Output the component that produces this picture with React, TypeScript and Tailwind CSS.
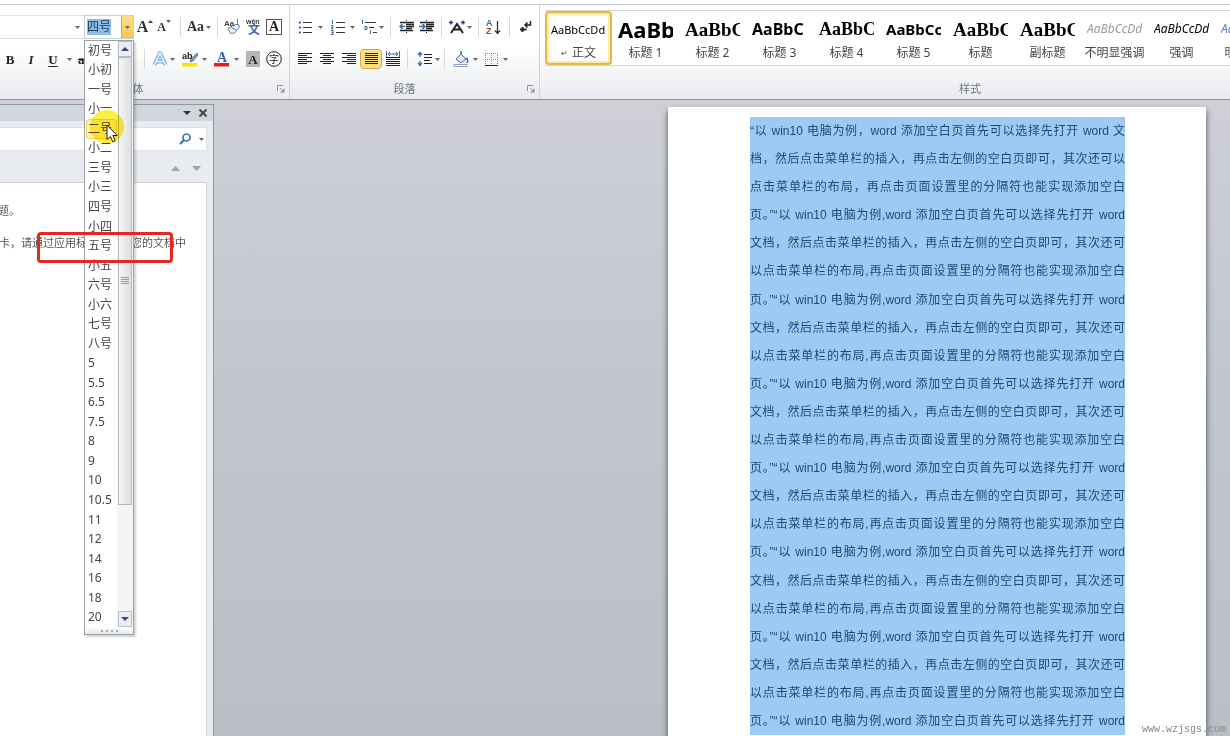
import React, { useState } from 'react';
import clsx from 'clsx';

const SIZES = [
  '初号', '小初', '一号', '小一', '二号', '小二', '三号', '小三', '四号', '小四',
  '五号', '小五', '六号', '小六', '七号', '八号', '5', '5.5', '6.5', '7.5',
  '8', '9', '10', '10.5', '11', '12', '14', '16', '18', '20',
];

const STYLES = [
  { label: '正文', sample: 'AaBbCcDd', cls: 'text-[11px] text-black' },
  { label: '标题 1', sample: 'AaBb', cls: 'text-[22px] font-bold text-black' },
  { label: '标题 2', sample: 'AaBbC', cls: "text-[19px] font-bold text-black font-['Liberation_Serif',serif]" },
  { label: '标题 3', sample: 'AaBbC', cls: 'text-base font-bold text-black' },
  { label: '标题 4', sample: 'AaBbC', cls: "text-[18px] font-bold text-black font-['Liberation_Serif',serif]" },
  { label: '标题 5', sample: 'AaBbCc', cls: 'text-[15px] font-bold text-black' },
  { label: '标题', sample: 'AaBbC', cls: "text-[19px] font-bold text-black font-['Liberation_Serif',serif]" },
  { label: '副标题', sample: 'AaBbC', cls: "text-[19px] font-bold text-black font-['Liberation_Serif',serif]" },
  { label: '不明显强调', sample: 'AaBbCcDd', cls: 'text-xs italic text-[#9a9a9a]' },
  { label: '强调', sample: 'AaBbCcDd', cls: 'text-xs italic text-black' },
  { label: '明显强调', sample: 'AaBbCcDd', cls: 'text-xs italic text-[#4f81bd]' },
];

const REPEATED = [
  '文档，然后点击菜单栏的插入，再点击左侧的空白页即可，其次还可',
  '以点击菜单栏的布局,再点击页面设置里的分隔符也能实现添加空白',
  '页。”“以 win10 电脑为例,word 添加空白页首先可以选择先打开 word',
];

const LINES = [
  '“以 win10 电脑为例，word 添加空白页首先可以选择先打开 word 文',
  '档，然后点击菜单栏的插入，再点击左侧的空白页即可，其次还可以',
  '点击菜单栏的布局，再点击页面设置里的分隔符也能实现添加空白',
  REPEATED[2],
  ...REPEATED, ...REPEATED, ...REPEATED, ...REPEATED, ...REPEATED, ...REPEATED,
];

const Caret: React.FC<{ className?: string }> = ({ className }) => (
  <svg viewBox="0 0 5 3" className={clsx('h-[3px] w-[5px] shrink-0', className)} fill="#666">
    <path d="M0 0h5L2.5 3z" />
  </svg>
);

const Sep: React.FC = () => <span className="h-5 w-px shrink-0 bg-[#d5d8dc]" />;

interface ToolProps {
  label: string;
  className: string;
  caret?: boolean;
  children: React.ReactNode;
}

const Tool: React.FC<ToolProps> = ({ label, className, caret, children }) => (
  <button
    type="button"
    aria-label={label}
    className={clsx('flex h-5 shrink-0 items-center justify-center leading-none', caret && 'gap-1', className)}
  >
    {children}
    {caret && <Caret />}
  </button>
);

const Icon: React.FC<{ children: React.ReactNode }> = ({ children }) => (
  <svg viewBox="0 0 16 16" className="size-4 shrink-0" fill="none" stroke="#222">
    {children}
  </svg>
);

const Launcher: React.FC<{ label: string }> = ({ label }) => (
  <button type="button" aria-label={label} className="absolute right-1 bottom-1.5 size-2">
    <svg viewBox="0 0 8 8" className="size-2" fill="none" stroke="#8d949c">
      <path d="M.5 6V.5H6M3 3l3 3" />
      <path d="M7.500 3v4.500H3z" fill="#8d949c" stroke="none" />
    </svg>
  </button>
);

const SizeMenu: React.FC<{ active: string; onPick: (s: string) => void }> = ({ active, onPick }) => (
  <div className="absolute top-full -left-px z-20 mt-0.5 w-[50px] border border-[#9aa0a8] bg-white shadow-[2px_2px_2px_rgba(0,0,0,0.18)]">
    <div className="flex h-[586px]">
      <div className="flex flex-1 flex-col pl-px" role="listbox" aria-label="字号列表">
        {SIZES.map(s => (
          <button
            key={s}
            type="button"
            role="option"
            aria-selected={s === active}
            onClick={() => onPick(s)}
            className={clsx(
              'flex min-h-0 flex-1 items-center pl-0.5 text-left text-xs leading-none whitespace-nowrap text-[#444]',
              s === active && 'rounded-sm bg-[#fff0a8] shadow-[inset_0_0_0_1px_#f5cf62]'
            )}
          >
            {s}
          </button>
        ))}
      </div>
      <div className="flex w-4 flex-col bg-[#f5f5f6] px-px">
        <div className="flex h-4 items-center justify-center border border-[#b9bec8] bg-[#e9edf5]">
          <svg viewBox="0 0 8 4" className="h-1 w-2" fill="#3f4a6b"><path d="M4 0l4 4H0z" /></svg>
        </div>
        <div className="flex h-[448px] items-center justify-center border border-[#b5b5b8] bg-linear-to-r from-[#f5f5f6] to-[#dedfe2]">
          <svg viewBox="0 0 8 8" className="size-2" stroke="#999"><path d="M0 .5h8M0 2.500h8M0 4.500h8M0 6.500h8" /></svg>
        </div>
        <div className="flex-1" />
        <div className="flex h-4 items-center justify-center border border-[#b9bec8] bg-[#e9edf5]">
          <svg viewBox="0 0 8 4" className="h-1 w-2" fill="#3f4a6b"><path d="M0 0h8L4 4z" /></svg>
        </div>
      </div>
    </div>
    <div className="flex h-[7px] items-center justify-center bg-linear-to-b from-white to-[#e6e8eb]">
      <svg viewBox="0 0 17 2" className="h-0.5 w-[17px]" fill="#a5a9ae">
        <path d="M0 0h2v2H0zM5 0h2v2H5zM10 0h2v2h-2zM15 0h2v2h-2z" />
      </svg>
    </div>
  </div>
);

const FontGroup: React.FC = () => {
  const [size, setSize] = useState('四号');
  const [open, setOpen] = useState(true);

  return (
    <section className="relative flex w-[290px] shrink-0 flex-col border-r border-[#cfd3d8]">
      <div className="mt-[10px] flex h-6 items-center">
        <div className="flex h-6 w-[84px] items-center border-y border-[#dcdfe3] bg-white pr-1">
          <input aria-label="字体" className="min-w-0 flex-1 outline-none" />
          <Caret />
        </div>
        <div className="relative flex h-6 w-[50px] border border-[#c9ced5] bg-white">
          <label className="flex flex-1 items-center pl-0.5">
            <input
              aria-label="字号"
              value={size}
              onChange={e => setSize(e.target.value)}
              className="h-4 w-6 bg-[#8dbbe6] text-xs text-[#1d3f63] outline-none"
            />
          </label>
          <button
            type="button"
            aria-label="展开字号"
            onClick={() => setOpen(!open)}
            className="flex w-3 items-center justify-center border-l border-[#d9a93c] bg-linear-to-b from-[#fde08a] to-[#f7c84b]"
          >
            <Caret />
          </button>
          {open && <SizeMenu active="二号" onPick={setSize} />}
        </div>
        <Tool label="增大字体" className="w-[22px] font-['Liberation_Serif',serif] text-base font-bold text-[#333]">
          A<svg viewBox="0 0 5 3" className="mb-3 h-[3px] w-[5px]" fill="#345"><path d="M0 3h5L2.500 0z" /></svg>
        </Tool>
        <Tool label="缩小字体" className="mr-2 w-4 font-['Liberation_Serif',serif] text-xs font-bold text-[#333]">
          A<Caret className="mb-3" />
        </Tool>
        <Sep />
        <Tool label="更改大小写" caret className="w-9 font-['Liberation_Serif',serif] text-sm font-bold text-[#333]">
          <span className="-mr-0.5">Aa</span>
        </Tool>
        <Sep />
        <Tool label="清除格式" className="ml-1.5 w-4">
          <Icon>
            <path d="M4 9.500L8 7l6-2 1.500 3-5 6-4 .5z" fill="#eef3fa" stroke="#5b7dad" />
            <path d="M7 8l5 3M13.500 0v6" stroke="#5b7dad" />
            <text x="0" y="7" fontSize="8" fontWeight="bold" fill="#444" stroke="none" fontFamily="Liberation Sans">Aa</text>
          </Icon>
        </Tool>
        <Tool label="拼音指南" className="ml-1.5 w-4">
          <svg viewBox="0 0 16 16" className="size-4" stroke="none">
            <text x="0" y="5" fontSize="7" fontWeight="bold" fill="#333" fontFamily="Liberation Sans">wén</text>
            <text x="2" y="15" fontSize="12" fontWeight="bold" fill="#3a68ad" fontFamily="Noto Sans CJK SC">文</text>
          </svg>
        </Tool>
        <Tool label="字符边框" className="ml-1 max-h-4 w-4 border border-[#555] font-['Liberation_Serif',serif] text-sm font-bold text-[#222]">
          A
        </Tool>
      </div>

      <div className="mt-2 flex h-6 items-center font-['Liberation_Serif',serif] text-[13px] text-[#222]">
        <Tool label="加粗" className="w-5 font-bold">B</Tool>
        <Tool label="倾斜" className="w-[22px] font-bold italic">I</Tool>
        <Tool label="下划线" className="w-[22px] font-bold underline underline-offset-2">U</Tool>
        <Tool label="下划线样式" className="w-[10px]"><Caret /></Tool>
        <Tool label="删除线" className="ml-1 w-[66px] justify-start! font-bold line-through">abc</Tool>
        <Sep />
        <Tool label="文本效果" caret className="w-9">
          <svg viewBox="0 0 16 16" className="-mr-0.5 size-4 shrink-0">
            <path d="M2.500 14L8 2l5.500 12M4.500 10.500h7" fill="none" stroke="#7fb2e0" strokeWidth="4" strokeLinejoin="round" />
            <path d="M2.500 14L8 2l5.500 12M4.500 10.500h7" fill="none" stroke="#eef7ff" strokeWidth="1.500" />
          </svg>
        </Tool>
        <Tool label="突出显示" caret className="w-[26px]">
          <svg viewBox="0 0 16 16" className="size-4 shrink-0">
            <text x="0" y="8" fontSize="9" fontWeight="bold" fill="#222" fontFamily="Liberation Sans">ab</text>
            <path d="M15 2L9 8l-1 3 3-1 5-6z" fill="#7a95bd" stroke="#4a6590" strokeWidth=".7" />
            <path d="M0 12h15v3.500H0z" fill="#f6e400" />
          </svg>
        </Tool>
        <Tool label="字体颜色" caret className="ml-1 w-[31px]">
          <svg viewBox="0 0 16 16" className="size-4 shrink-0">
            <text x="3" y="11" fontSize="14" fontWeight="bold" fill="#3b63a8" fontFamily="Liberation Serif">A</text>
            <path d="M0 12h15v3.500H0z" fill="#e3200f" />
          </svg>
        </Tool>
        <Tool label="字符底纹" className="ml-1 max-h-4 w-[14px] bg-[#b5b5b5] font-bold">A</Tool>
        <Tool label="带圈字符" className="ml-1.5 w-4">
          <svg viewBox="0 0 16 16" className="size-4">
            <circle cx="8" cy="8" r="7.300" fill="none" stroke="#222" />
            <text x="3" y="12" fontSize="10" fill="#222" fontFamily="Noto Sans CJK SC">字</text>
          </svg>
        </Tool>
      </div>
      <h2 className="mt-auto mb-0.5 pr-6 text-center text-[11px] leading-4 text-[#6b7480]">字体</h2>
      <Launcher label="字体设置" />
    </section>
  );
};

const ParagraphGroup: React.FC = () => (
  <section className="relative flex w-[250px] shrink-0 flex-col border-r border-[#cfd3d8]">
    <div className="mt-[10px] flex h-6 items-center pl-2">
      <Tool label="项目符号" caret className="w-6">
        <Icon>
          <path d="M5 3.500h9M5 8.500h9M5 13.500h9" stroke="#333" />
          <path d="M1 3.500h2M1 8.500h2M1 13.500h2" stroke="#3c66ad" strokeWidth="2" />
        </Icon>
      </Tool>
      <Tool label="编号" caret className="ml-2 w-6">
        <Icon>
          <path d="M6 3.500h9M6 8.500h9M6 13.500h9" stroke="#333" />
          <path d="M2.500 1v4M1 6.500h2v2H1.500v1.500h2M1 11.500h2v4H1M1.500 13.500h2" stroke="#3c66ad" />
        </Icon>
      </Tool>
      <Tool label="多级列表" caret className="ml-1.5 w-6 gap-0.5!">
        <Icon>
          <path d="M4 3.500h11M8 8.500h5M12 13.500h4" stroke="#333" />
          <path d="M1.500 1v4M4 7.500h2v3H4zM9.500 11v4" stroke="#3c66ad" />
        </Icon>
      </Tool>
      <span className="w-1.5" />
      <Sep />
      <Tool label="减少缩进" className="ml-2 w-4">
        <Icon>
          <path d="M1 3.500h14M7 5.500h8M7 7.500h8M7 9.500h6M1 11.500h13" strokeWidth="1.300" />
          <path d="M7.500 1v14" strokeDasharray="1 1" />
          <path d="M6 7.500H1M3.500 5L1 7.500 3.500 10" stroke="#3c66ad" strokeWidth="1.500" />
        </Icon>
      </Tool>
      <Tool label="增加缩进" className="ml-1 w-4">
        <Icon>
          <path d="M1 3.500h14M7 5.500h8M7 7.500h8M7 9.500h6M1 11.500h13" strokeWidth="1.300" />
          <path d="M7.500 1v14" strokeDasharray="1 1" />
          <path d="M0 7.500h6M3.500 5L6 7.500 3.500 10" stroke="#3c66ad" strokeWidth="1.500" />
        </Icon>
      </Tool>
      <span className="w-1.5" />
      <Sep />
      <Tool label="中文版式" caret className="ml-1.5 w-6 gap-0.5!">
        <Icon>
          <path d="M2 14L8 5l6 9M5 10.500h6" strokeWidth="2" />
          <path d="M0 3.500h4M2 1.500v4M12 3.500h4M14 1.500v4" stroke="#2c2f7c" strokeWidth="1.300" />
        </Icon>
      </Tool>
      <span className="w-1.5" />
      <Sep />
      <Tool label="排序" className="ml-1.5 w-4">
        <svg viewBox="0 0 16 16" className="size-4">
          <text x="1" y="7" fontSize="9" fontWeight="bold" fill="#3c66ad" fontFamily="Liberation Sans">A</text>
          <text x="1" y="15" fontSize="9" fontWeight="bold" fill="#a5413c" fontFamily="Liberation Sans">Z</text>
          <path d="M12.500 2v12M10 11.500l2.500 3 2.500-3" fill="none" stroke="#333" strokeWidth="1.300" />
        </svg>
      </Tool>
      <span className="w-2" />
      <Sep />
      <Tool label="显示编辑标记" className="ml-2 w-4">
        <Icon>
          <path d="M12.500 2v4H7M9.500 3.500L7 6l2.500 2.500" strokeWidth="1.500" />
          <path d="M8.500 10.500H2M4.500 8v5" strokeWidth="2" />
        </Icon>
      </Tool>
    </div>
    <div className="mt-2 flex h-6 items-center pl-1">
      <Tool label="左对齐" className="w-[22px]">
        <Icon><path d="M1 2.500h14M1 4.500h9M1 6.500h14M1 8.500h9M1 10.500h14M1 12.500h9" /></Icon>
      </Tool>
      <Tool label="居中" className="w-[22px]">
        <Icon><path d="M1 2.500h14M4 4.500h8M1 6.500h14M4 8.500h8M1 10.500h14M4 12.500h8" /></Icon>
      </Tool>
      <Tool label="右对齐" className="w-[22px]">
        <Icon><path d="M1 2.500h14M6 4.500h9M1 6.500h14M6 8.500h9M1 10.500h14M6 12.500h9" /></Icon>
      </Tool>
      <Tool label="两端对齐" className="w-[22px] rounded-sm border border-[#d9a83f] bg-[#ffdf7f]">
        <Icon><path d="M2 2.500h13M2 4.500h13M2 6.500h13M2 8.500h13M2 10.500h13M2 12.500h13" /></Icon>
      </Tool>
      <Tool label="分散对齐" className="w-[22px]">
        <Icon>
          <path d="M1 6.500h14M1 8.500h14M1 10.500h14M1 12.500h14M1 14.500h14" />
          <path d="M1.500 0v6M14.500 0v6M3 3h10M5 1L3 3l2 2M11 1l2 2-2 2" stroke="#3c66ad" />
        </Icon>
      </Tool>
      <span className="w-[3px]" />
      <Sep />
      <Tool label="行距" caret className="ml-2 w-6 gap-0.5!">
        <Icon>
          <path d="M7 3.500h8M7 6.500h8M7 9.500h6M7 12.500h8" />
          <path d="M3 1v5M1 4l2-2.500L5 4M3 15v-5M1 12l2 2.500L5 12" stroke="#3c66ad" strokeWidth="1.300" />
        </Icon>
      </Tool>
      <span className="w-1" />
      <Sep />
      <Tool label="底纹" caret className="ml-2 w-6">
        <Icon>
          <path d="M3 8l5-5 5 5-5 4z" fill="#dce7f5" stroke="#4a6590" />
          <path d="M8 3V0M13 7c2 1 2 3 1 5" stroke="#3c66ad" strokeWidth="1.500" />
          <path d="M1 13.500h13v2H1z" fill="#fff" stroke="#8d9db3" />
        </Icon>
      </Tool>
      <Tool label="边框" caret className="ml-1.5 w-6">
        <Icon>
          <path d="M2 2.500h13M2.500 2v12M14.500 2v12M8.500 2v12M2 8.500h13" stroke="#888" strokeDasharray="1 1" />
          <path d="M2 14.500h13" />
        </Icon>
      </Tool>
    </div>
    <h2 className="mt-auto mb-0.5 pr-5 text-center text-[11px] leading-4 text-[#6b7480]">段落</h2>
    <Launcher label="段落设置" />
  </section>
);

const StylesGroup: React.FC = () => {
  const [selected, setSelected] = useState('正文');

  return (
    <section className="flex min-w-0 flex-1 flex-col pl-[5px]">
      <div className="mt-[5px] flex h-14 overflow-hidden border-y border-[#d3d6da] bg-white">
        {STYLES.map(s => (
          <button
            key={s.label}
            type="button"
            onClick={() => setSelected(s.label)}
            className={clsx(
              'flex w-[67px] shrink-0 flex-col rounded-sm border-2 px-1',
              s.label === selected ? 'border-[#e3b54c] shadow-[inset_0_0_0_2px_#ffe9a6]' : 'border-transparent'
            )}
          >
            <span
              className={clsx(
                'flex h-8 items-center self-stretch overflow-hidden leading-none whitespace-nowrap',
                s.cls
              )}
            >
              {s.sample}
            </span>
            <span className="flex h-4 items-center justify-center self-stretch text-xs leading-none whitespace-nowrap text-[#444]">
              {s.label === '正文' && <span className="mr-1 text-[8px]">↵</span>}
              {s.label}
            </span>
          </button>
        ))}
      </div>
      <h2 className="mt-auto mb-0.5 pl-[165px] text-center text-[11px] leading-4 text-[#6b7480]">样式</h2>
    </section>
  );
};

const NavigationPane: React.FC = () => (
  <aside className="mt-1 flex w-[214px] shrink-0 flex-col border-t border-r border-[#8f979f] bg-[#e8ebef]">
    <header className="flex h-4 items-center justify-end gap-2 bg-[#d0d6dd] pr-1.5">
      <button type="button" aria-label="窗格选项">
        <svg viewBox="0 0 8 4" className="h-1 w-2" fill="#333"><path d="M0 0h8L4 4z" /></svg>
      </button>
      <button type="button" aria-label="关闭">
        <svg viewBox="0 0 8 8" className="size-2" stroke="#444" strokeWidth="2"><path d="M.5.5l7 7M7.500.5l-7 7" /></svg>
      </button>
    </header>
    <div className="mt-1.5 mr-1.5 flex h-6 items-center gap-2 border-y border-r border-[#dde0e4] bg-white pr-0.5">
      <input aria-label="搜索文档" className="min-w-0 flex-1 outline-none" />
      <button type="button" aria-label="搜索">
        <svg viewBox="0 0 12 12" className="size-3" fill="none" stroke="#3a72b5" strokeWidth="1.700">
          <circle cx="7.500" cy="4.500" r="3.500" />
          <path d="M5 7l-4 4" strokeWidth="2.200" />
        </svg>
      </button>
      <Caret />
    </div>
    <div className="flex h-[31px] items-center justify-end gap-3 pt-1 pr-3">
      <button type="button" aria-label="上一标题">
        <svg viewBox="0 0 9 5" className="h-[5px] w-[9px]" fill="#a0a3a7"><path d="M4.500 0L9 5H0z" /></svg>
      </button>
      <button type="button" aria-label="下一标题">
        <svg viewBox="0 0 9 5" className="h-[5px] w-[9px]" fill="#a0a3a7"><path d="M0 0h9L4.500 5z" /></svg>
      </button>
    </div>
    <div className="mr-1.5 flex-1 overflow-hidden border-t border-r border-[#cfd3d8] bg-white pt-5 text-[11px] leading-4 text-[#555]">
      <p className="-ml-0.5">题。</p>
      <p className="mt-4 flex justify-end pr-5 whitespace-nowrap">卡，请通过应用标题样式在您的文档中</p>
    </div>
  </aside>
);

const App: React.FC = () => {
  return (
    <div className="relative flex h-screen flex-col overflow-hidden bg-white font-['Noto_Sans','Noto_Sans_CJK_SC',sans-serif]">
      <div className="flex h-[100px] shrink-0 flex-col pt-1">
        <div className="flex flex-1 border-t border-b border-t-[#c3c6c9] border-b-[#8b949d] bg-linear-to-b from-white from-45% to-[#e8eaed]">
          <FontGroup />
          <ParagraphGroup />
          <StylesGroup />
        </div>
      </div>

      <main className="flex min-h-0 flex-1 bg-linear-to-b from-[#cfd0d7] via-[#c1c6cd] via-45% to-[#bbbfc5]">
        <NavigationPane />
        <div className="flex min-w-0 flex-1 justify-end overflow-hidden pt-[7px] pr-6">
          <article className="w-[538px] shrink-0 bg-white pt-2.5 shadow-[0_4px_6px_rgba(40,45,60,0.8)]">
            <div className="mr-[81px] ml-[82px] flex min-h-[618px] flex-col justify-between bg-[#9ccaf2] font-['Liberation_Sans','Noto_Sans_CJK_SC',sans-serif] text-xs text-[#1c4a78]">
              {LINES.map((line, i) => (
                <p key={i} className="leading-7 whitespace-nowrap [text-align-last:justify]">{line}</p>
              ))}
            </div>
          </article>
        </div>
      </main>

      <span className="absolute top-[110px] left-[90px] z-30 size-[34px] rounded-full bg-[#fbee45] mix-blend-multiply" />
      <svg viewBox="0 0 12 19" className="absolute top-[124px] left-[106px] z-30 h-[19px] w-3" fill="#fff" stroke="#222">
        <path d="M1 1v14.500l3.500-3 2.300 5.300 2.400-1-2.300-5.300H11.300z" />
      </svg>
      <span className="absolute top-[232px] left-[37px] z-30 h-[31px] w-[136px] rounded-sm border-3 border-[#e32a20]" />
      <span className="absolute right-1 bottom-0 font-['Liberation_Mono',monospace] text-[10px] leading-3 text-[#8a8a8a]">
        www.wzjsgs.com
      </span>
    </div>
  );
};

export default App;
